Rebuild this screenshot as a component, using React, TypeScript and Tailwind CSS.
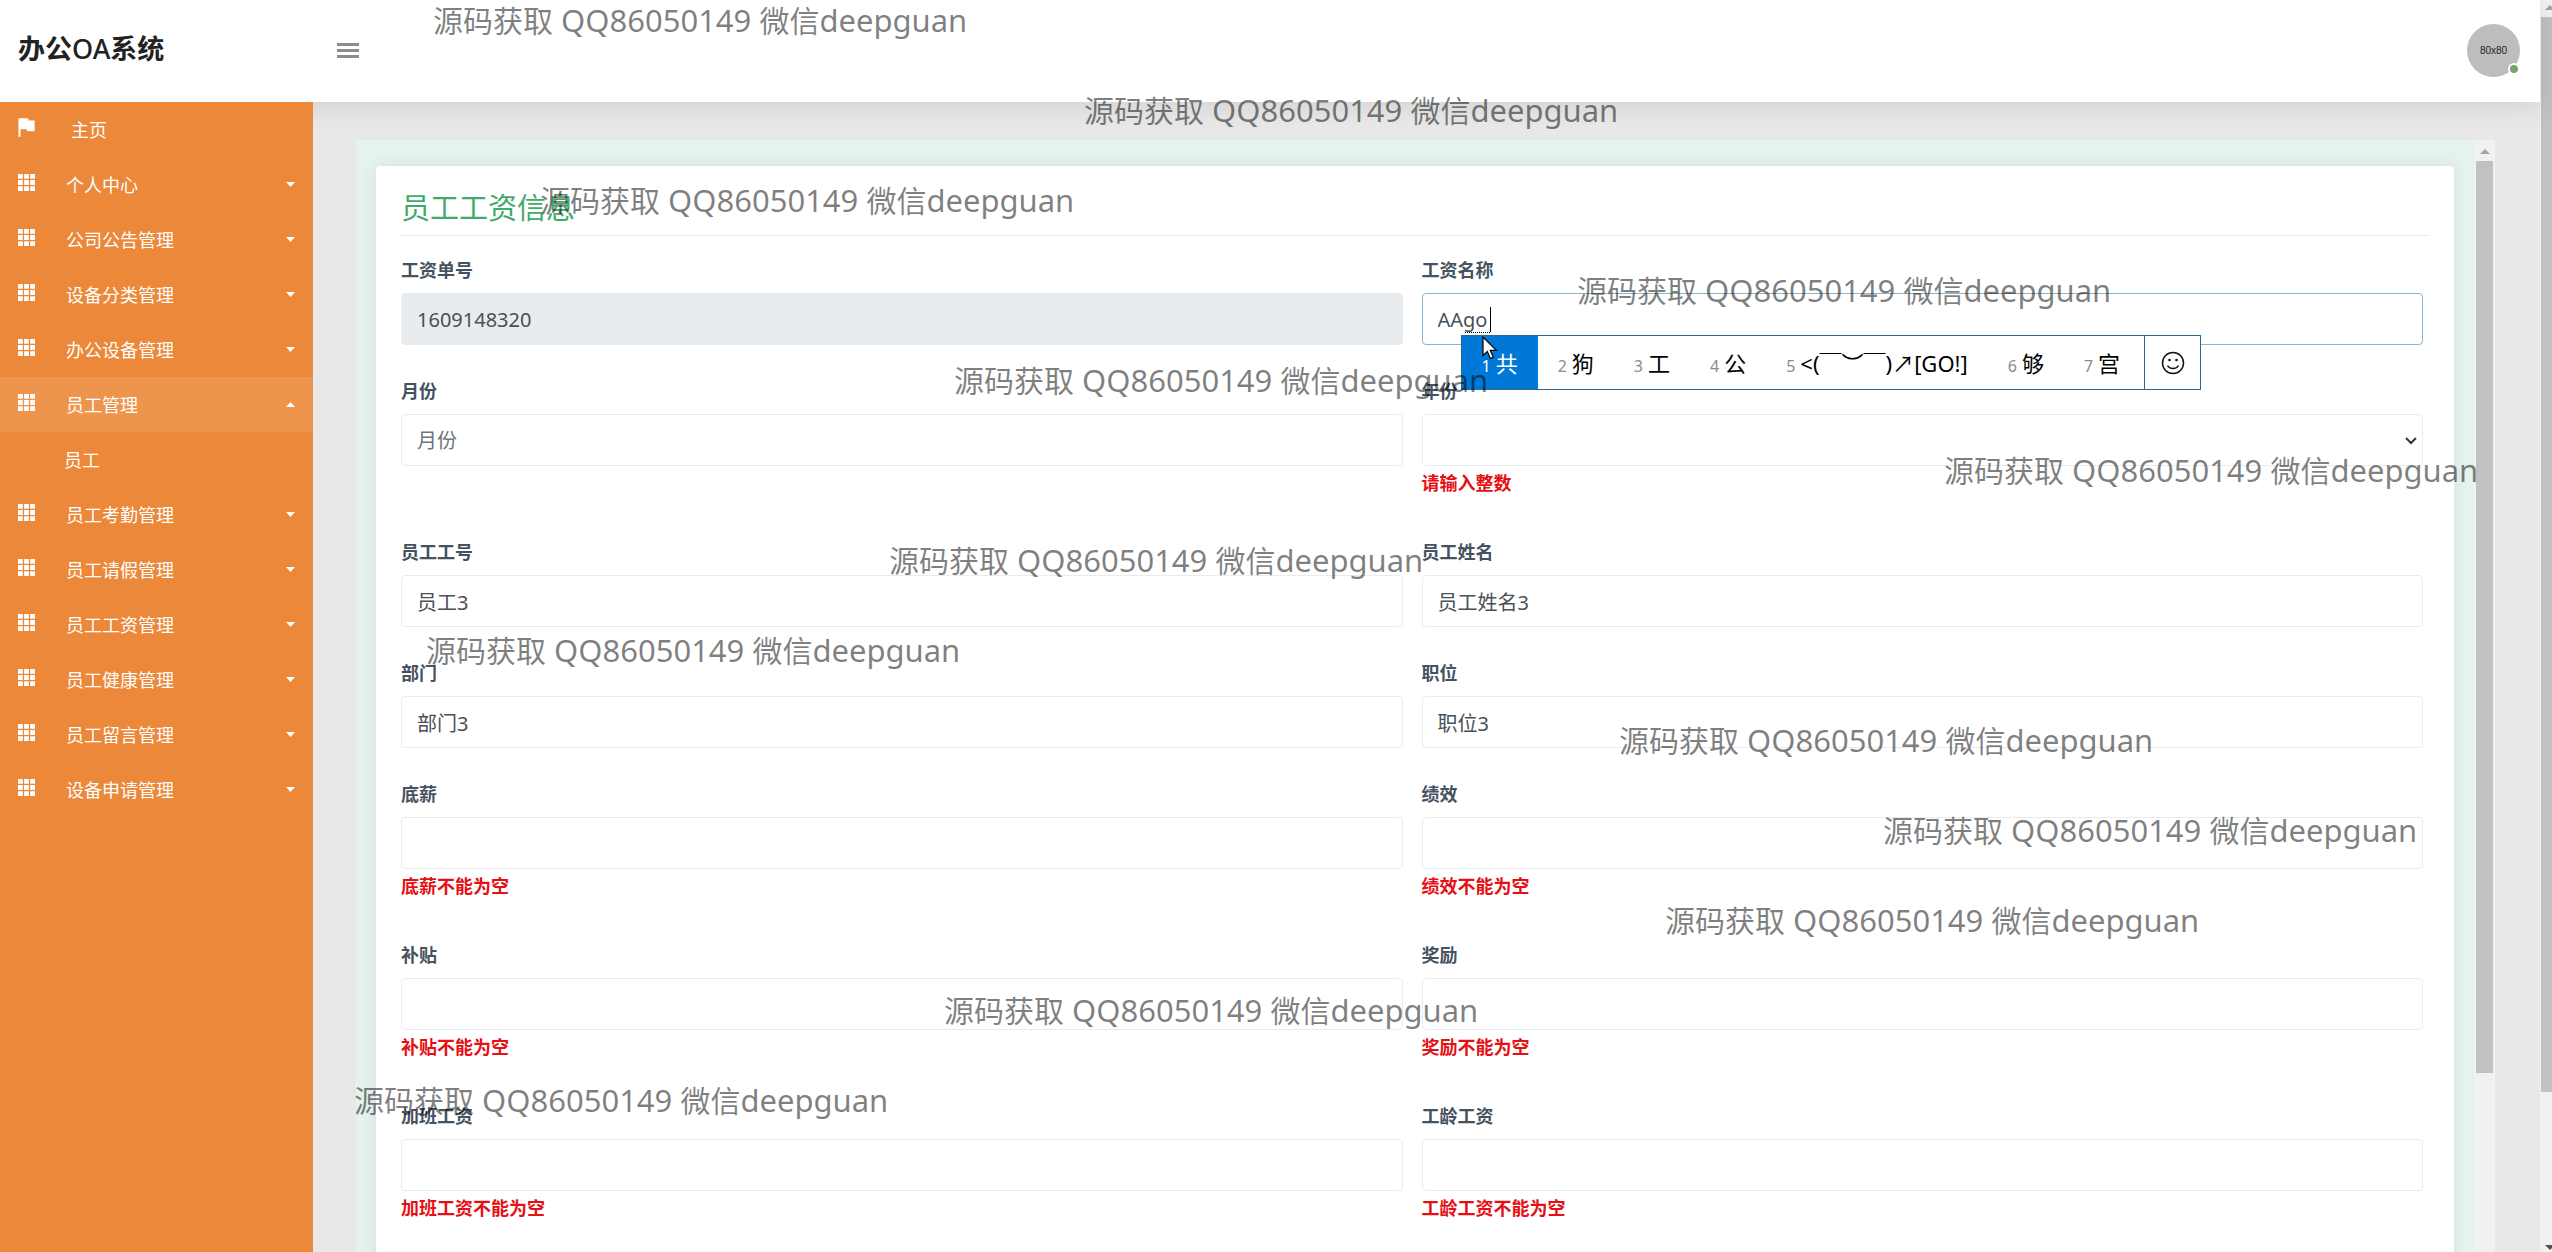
import { MdFlag } from "react-icons/md";

const FONT = "font-['Noto_Sans','Noto_Sans_CJK_SC',sans-serif]";

const menu = [
  { name: "个人中心" },
  { name: "公司公告管理" },
  { name: "设备分类管理" },
  { name: "办公设备管理" },
  { name: "员工管理", open: true, children: ["员工"] },
  { name: "员工考勤管理" },
  { name: "员工请假管理" },
  { name: "员工工资管理" },
  { name: "员工健康管理" },
  { name: "员工留言管理" },
  { name: "设备申请管理" },
];

type FieldData = {
  id: string;
  label: string;
  value?: string;
  placeholder?: string;
  error?: string;
  kind?: "readonly" | "focus" | "select";
};

const rows: FieldData[][] = [
  [
    { id: "serial", label: "工资单号", value: "1609148320", kind: "readonly" },
    { id: "title", label: "工资名称", value: "AAgo", kind: "focus" },
  ],
  [
    { id: "month", label: "月份", placeholder: "月份" },
    { id: "year", label: "年份", error: "请输入整数", kind: "select" },
  ],
  [
    { id: "staff-no", label: "员工工号", value: "员工3" },
    { id: "staff-name", label: "员工姓名", value: "员工姓名3" },
  ],
  [
    { id: "dept", label: "部门", value: "部门3" },
    { id: "post", label: "职位", value: "职位3" },
  ],
  [
    { id: "base", label: "底薪", error: "底薪不能为空" },
    { id: "perf", label: "绩效", error: "绩效不能为空" },
  ],
  [
    { id: "allowance", label: "补贴", error: "补贴不能为空" },
    { id: "bonus", label: "奖励", error: "奖励不能为空" },
  ],
  [
    { id: "overtime", label: "加班工资", error: "加班工资不能为空" },
    { id: "seniority", label: "工龄工资", error: "工龄工资不能为空" },
  ],
];

const candidates = ["共", "狗", "工", "公", "<(￣︶￣)↗[GO!]", "够", "宫"];

const watermarks = [
  { left: 433, top: 0 },
  { left: 1084, top: 90 },
  { left: 540, top: 180 },
  { left: 1577, top: 270 },
  { left: 954, top: 360 },
  { left: 1944, top: 450 },
  { left: 889, top: 540 },
  { left: 426, top: 630 },
  { left: 1619, top: 720 },
  { left: 1883, top: 810 },
  { left: 1665, top: 900 },
  { left: 944, top: 990 },
  { left: 354, top: 1080 },
];

function Caret({ up }: { up?: boolean }) {
  return (
    <svg className="h-[5px] w-[9px] fill-white" viewBox="0 0 9 5" aria-hidden="true">
      <path d={up ? "M0 5 4.500 0 9 5z" : "M0 0h9L4.500 5z"} />
    </svg>
  );
}

function GridIcon() {
  return (
    <svg className="mb-[5px] size-[17px] fill-white" viewBox="0 0 17 17" aria-hidden="true">
      <path d="M0 0h4.800v4.800H0zM6.100 0h4.800v4.800H6.100zM12.200 0H17v4.800h-4.800zM0 6.100h4.800v4.800H0zM6.100 6.100h4.800v4.800H6.100zM12.200 6.100H17v4.800h-4.800zM0 12.200h4.800V17H0zM6.100 12.200h4.800V17H6.100zM12.200 12.200H17V17h-4.800z" />
    </svg>
  );
}

function Sidebar() {
  return (
    <nav className="relative w-[313px] shrink-0 bg-[#eb8839] text-lg text-white">
      <a href="#home" className="flex h-[55px] items-center pl-[13px]">
        <MdFlag className="mb-[5px] size-[26px]" />
        <span className="ml-8">主页</span>
      </a>
      {menu.map((m) => (
        <div key={m.name}>
          <button
            type="button"
            className={
              m.open
                ? "flex h-[55px] w-full items-center bg-[#ee954d] pr-[18px] pl-[18px]"
                : "flex h-[55px] w-full items-center pr-[18px] pl-[18px]"
            }
          >
            <GridIcon />
            <span className="ml-[31px] grow text-left">{m.name}</span>
            <Caret up={m.open} />
          </button>
          {m.children?.map((c) => (
            <a key={c} href="#staff" className="flex h-[55px] items-center pl-16">
              {c}
            </a>
          ))}
        </div>
      ))}
    </nav>
  );
}

function Candidates() {
  return (
    <div className="absolute top-[42px] left-[39px] z-10 flex h-[55px] border border-[#2b6b88] bg-white whitespace-nowrap text-black">
      {candidates.map((c, i) => (
        <button
          type="button"
          key={c}
          className={
            i === 0
              ? "flex items-baseline gap-[5px] bg-[#0078d7] px-5 pt-[11px] text-white"
              : "flex items-baseline gap-[5px] px-5 pt-[11px]"
          }
        >
          <span className={i === 0 ? "text-base" : "text-base text-[#8a8a8a]"}>{i + 1}</span>
          <span className="text-[22px]">{c}</span>
        </button>
      ))}
      <button
        type="button"
        aria-label="表情"
        className="ml-1 flex w-[56px] items-center justify-center border-l border-[#2b6b88]"
      >
        <svg className="size-6" viewBox="0 0 24 24" fill="none" stroke="#111" strokeWidth="1.500">
          <circle cx="12" cy="12" r="10.500" />
          <path d="M6.500 14.500a6 5 0 0 0 11 0" />
          <circle cx="8.500" cy="9" r="1.300" fill="#111" stroke="none" />
          <circle cx="15.500" cy="9" r="1.300" fill="#111" stroke="none" />
        </svg>
      </button>
      <svg className="absolute top-0 left-5 h-6 w-4" viewBox="0 0 16 24">
        <path
          d="M1 1v18.500l4.300-4 3 7 3-1.300-3-6.800h6z"
          fill="#fff"
          stroke="#000"
          strokeWidth="1.200"
        />
      </svg>
    </div>
  );
}

function Control({ f }: { f: FieldData }) {
  if (f.kind === "select") {
    return (
      <div className="relative">
        <select
          id={f.id}
          className="block h-[52px] w-full appearance-none rounded border border-[#e9ecef] bg-white px-[15px] text-xl text-[#495057]"
        >
          <option></option>
        </select>
        <svg
          className="pointer-events-none absolute top-[23px] right-[6px] h-2 w-3"
          viewBox="0 0 12 8"
          fill="none"
          stroke="#333"
          strokeWidth="2"
        >
          <path d="m1 1 5 5 5-5" />
        </svg>
      </div>
    );
  }
  if (f.kind === "focus") {
    return (
      <div className="relative">
        <input
          id={f.id}
          defaultValue={f.value}
          className="block h-[52px] w-full rounded border border-[#86b7cf] bg-white px-[15px] text-xl text-[#495057] outline-none"
        />
        <span className="absolute top-[39px] left-[43px] w-[25px] border-b border-dotted border-black" />
        <span className="absolute top-[14px] left-[68px] h-[25px] w-px bg-black" />
        <Candidates />
      </div>
    );
  }
  return (
    <input
      id={f.id}
      defaultValue={f.value}
      placeholder={f.placeholder}
      readOnly={f.kind === "readonly"}
      className={
        f.kind === "readonly"
          ? "block h-[52px] w-full rounded border border-[#e9ecef] bg-[#e9ecef] px-[15px] text-xl text-[#495057] outline-none"
          : "block h-[52px] w-full rounded border border-[#e9ecef] bg-white px-[15px] text-xl text-[#495057] outline-none placeholder:text-[#6c757d]"
      }
    />
  );
}

function Field({ f }: { f: FieldData }) {
  return (
    <div>
      <label htmlFor={f.id} className="mb-[9px] block text-lg/[27px] font-bold text-[#455260]">
        {f.label}
      </label>
      <Control f={f} />
      {f.error && <p className="mt-1 mb-[9px] text-lg/[27px] font-bold text-[#e60f14]">{f.error}</p>}
    </div>
  );
}

function Watermarks() {
  return (
    <div className="pointer-events-none absolute inset-0 z-20 overflow-hidden" aria-hidden="true">
      {watermarks.map((w) => (
        <span
          key={w.top}
          className="absolute text-[30px]/[40px] whitespace-nowrap text-black/50"
          style={{ left: w.left, top: w.top }}
        >
          源码获取<span className="text-[31px]"> QQ86050149 </span>微信
          <span className="text-[31px]">deepguan</span>
        </span>
      ))}
    </div>
  );
}

export default function App() {
  return (
    <div className={`relative flex h-screen overflow-hidden ${FONT}`}>
      <div className="flex min-w-0 grow flex-col">
        <header className="relative flex h-[102px] shrink-0 items-start bg-white pt-6 pr-5 pl-[18px] shadow-[0_4px_24px_rgba(0,0,0,0.1)]">
          <h1 className="w-[319px] text-[27px]/[50px] font-bold text-[#222]">
            办公<span className="font-medium">OA</span>系统
          </h1>
          <button type="button" aria-label="菜单" className="mt-[19px] flex w-[22px] flex-col gap-[3px]">
            <span className="h-[3px] bg-[#8c8c8c]" />
            <span className="h-[3px] bg-[#8c8c8c]" />
            <span className="h-[3px] bg-[#8c8c8c]" />
          </button>
          <div className="relative ml-auto flex size-[53px] items-center justify-center rounded-full bg-[#bdbdbd] font-['Liberation_Sans',sans-serif] text-[10px] text-[#222]">
            80x80
            <span className="absolute right-0 bottom-[2px] size-3 rounded-full border-2 border-white bg-[#74a66c]" />
          </div>
        </header>
        <div className="flex min-h-0 grow">
          <Sidebar />
          <main className="flex min-w-0 grow bg-[#e8e8e8] pt-[38px] pr-[45px] pl-[43px]">
            <div className="min-w-0 grow overflow-hidden bg-[#e5f3ec] pt-[26px] pr-5 pl-5">
              <form className="rounded bg-white px-[25px] pt-5 pb-24 shadow-[0_0_14px_rgba(205,215,235,0.8)]">
                <h2 className="mb-[21px] border-b border-[#e9ecef] pb-[5px] text-[29px]/[44px] text-[#3fab6b]">
                  员工工资信息
                </h2>
                <div className="flex flex-col gap-[33px] pr-[6px]">
                  {rows.map((r) => (
                    <div key={r[0].id} className="grid grid-cols-2 gap-[19px]">
                      {r.map((f) => (
                        <Field key={f.id} f={f} />
                      ))}
                    </div>
                  ))}
                </div>
              </form>
            </div>
            <div className="flex w-[21px] flex-col items-center bg-[#f1f1f1]">
              <svg className="mt-[9px] mb-[7px] h-[5px] w-[10px] fill-[#a3a3a3]" viewBox="0 0 10 5">
                <path d="M0 5 5 0l5 5z" />
              </svg>
              <div className="h-[912px] w-[17px] bg-[#c1c1c1]" />
            </div>
          </main>
        </div>
      </div>
      <div className="flex w-3 shrink-0 flex-col overflow-hidden bg-[#f1f1f1] pl-px">
        <svg className="mt-[5px] mb-[7px] ml-1 h-[5px] w-[10px] shrink-0 fill-[#a3a3a3]" viewBox="0 0 10 5">
          <path d="M0 5 5 0l5 5z" />
        </svg>
        <div className="h-[1075px] bg-[#c1c1c1]" />
        <svg className="mt-auto mb-[2px] ml-1 h-[5px] w-[10px] shrink-0 fill-[#505050]" viewBox="0 0 10 5">
          <path d="M0 0h10L5 5z" />
        </svg>
      </div>
      <Watermarks />
    </div>
  );
}
